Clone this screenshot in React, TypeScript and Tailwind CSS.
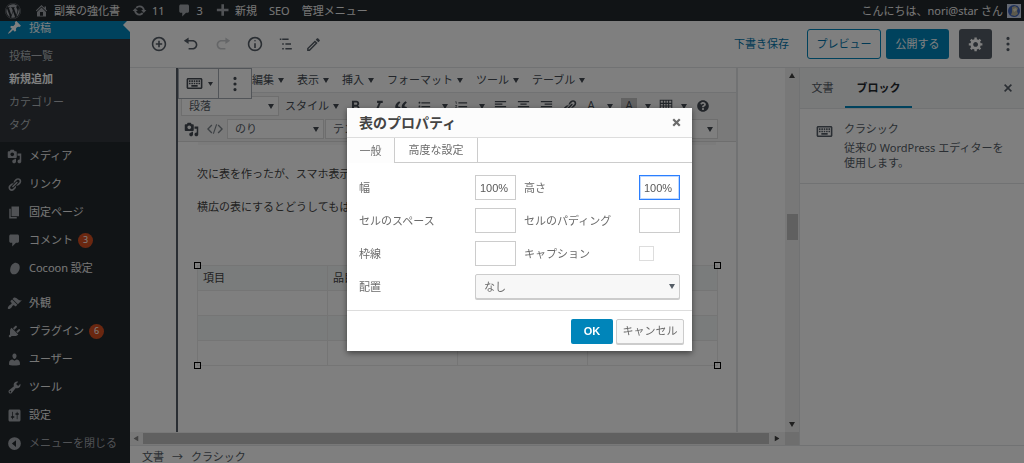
import React from 'react'
import { clsx } from 'clsx'
import { FaWordpress, FaQuestionCircle } from 'react-icons/fa'
import {
  MdFormatBold,
  MdFormatItalic,
  MdFormatListBulleted,
  MdFormatListNumbered,
  MdFormatAlignLeft,
  MdFormatAlignCenter,
  MdFormatAlignRight,
  MdOutlineEdit,
} from 'react-icons/md'

// 20x20 admin glyphs
const icons = {
  home: 'M16 8.5l1.53 1.53-1.06 1.06L10 4.6l-6.47 6.49-1.06-1.06L10 2.5l4 4v-2h2v4zm-6-2.46l6 5.99V18H4v-5.97zM12 17v-5H8v5h4z',
  update:
    'M10.2 3.28c3.53 0 6.43 2.61 6.92 6h2.08l-3.5 4-3.5-4h2.32c-.45-1.97-2.21-3.45-4.32-3.45-1.45 0-2.73.71-3.54 1.78L4.95 5.66C6.23 4.2 8.11 3.28 10.2 3.28zm-.4 13.44c-3.52 0-6.43-2.61-6.92-6H.8l3.5-4c1.17 1.33 2.33 2.67 3.5 4H5.48c.45 1.97 2.21 3.45 4.32 3.45 1.45 0 2.73-.71 3.54-1.78l1.71 1.95c-1.28 1.46-3.15 2.38-5.25 2.38z',
  comment: 'M5 2h9c1.1 0 2 .9 2 2v7c0 1.1-.9 2-2 2h-2l-5 5v-5H5c-1.1 0-2-.9-2-2V4c0-1.1.9-2 2-2z',
  plus: 'M18 7.5V11h-6v6H8.5v-6h-6V7.5h6v-6H12v6z',
  post: 'M10.44 3.02l1.82-1.82 6.36 6.35-1.83 1.82c-1.05-.68-2.48-.57-3.41.36l-.75.75c-.92.93-1.04 2.35-.35 3.41l-1.83 1.82-2.41-2.41-2.8 2.79c-.42.42-3.38 2.71-3.8 2.29s1.86-3.39 2.28-3.81l2.79-2.79L4.1 9.36l1.83-1.82c1.05.69 2.48.57 3.4-.36l.75-.75c.93-.92 1.05-2.35.36-3.41z',
  media:
    'M13 11V4c0-.55-.45-1-1-1h-1.67L9 1H5L3.67 3H2c-.55 0-1 .45-1 1v7c0 .55.45 1 1 1h10c.55 0 1-.45 1-1zM7 4.5c1.38 0 2.5 1.12 2.5 2.5S8.38 9.5 7 9.5 4.5 8.38 4.5 7 5.62 4.5 7 4.5zM14 6h5v10.5c0 1.38-1.12 2.5-2.5 2.5S14 17.88 14 16.5s1.12-2.5 2.5-2.5c.17 0 .34.02.5.05V9h-3V6zm-4 8.05V13h2v3.5c0 1.38-1.12 2.5-2.5 2.5S7 17.88 7 16.5 8.12 14 9.5 14c.17 0 .34.02.5.05z',
  link: 'M17.74 2.76c1.68 1.69 1.68 4.41 0 6.1l-1.53 1.52c-1.12 1.12-2.7 1.47-4.14 1.09l2.62-2.61.76-.77.76-.76c.84-.84.84-2.2 0-3.04-.84-.85-2.2-.85-3.04 0l-.77.76-3.38 3.38c-.37-1.44-.02-3.02 1.1-4.14l1.52-1.53c1.69-1.68 4.42-1.68 6.1 0zM8.59 13.43l5.34-5.34c.42-.42.42-1.1 0-1.52-.44-.43-1.13-.39-1.53 0l-5.33 5.34c-.42.42-.42 1.1 0 1.52.44.43 1.13.39 1.52 0zm-.76 2.29l4.14-4.15c.38 1.44.03 3.02-1.09 4.14l-1.52 1.53c-1.69 1.68-4.41 1.68-6.1 0-1.68-1.68-1.68-4.42 0-6.1l1.53-1.52c1.12-1.12 2.7-1.47 4.14-1.1l-4.14 4.15c-.85.84-.85 2.2 0 3.05.84.84 2.2.84 3.04 0z',
  page: 'M6 15V2h10v13H6zm-1 1h8v2H3V5h2v11z',
  appearance:
    'M14.48 11.06L7.41 3.99l1.5-1.5c.5-.56 2.3-.47 3.51.32 1.21.8 1.43 1.28 2.91 2.1 1.18.64 2.45 1.26 4.45.85zm-.71.71L6.7 4.7 4.93 6.47c-.39.39-.39 1.02 0 1.41l1.06 1.06c.39.39.39 1.03 0 1.42-.6.6-1.43 1.11-2.21 1.69-.35.26-.7.53-1.01.84C1.43 14.23.4 16.08 1.4 17.07c.99 1 2.84-.03 4.18-1.36.31-.31.58-.66.85-1.02.57-.78 1.08-1.61 1.69-2.21.39-.39 1.02-.39 1.41 0l1.06 1.06c.39.39 1.02.39 1.41 0z',
  plugins:
    'M13.11 4.36L9.87 7.6 8 5.73l3.24-3.24c.35-.34 1.05-.2 1.56.32.52.51.66 1.21.31 1.55zm-8 1.77l.91-1.12 9.01 9.01-1.19.84c-.71.71-2.63 1.16-3.82 1.16H6.14L4.9 17.26c-.59.59-1.54.59-2.12 0-.59-.58-.59-1.53 0-2.12l1.24-1.24v-3.88c0-1.13.4-3.19 1.09-3.89zm7.26 3.97l3.24-3.24c.34-.35 1.04-.21 1.55.31.52.51.66 1.21.31 1.55l-3.24 3.25z',
  users:
    'M10 9.25c-2.27 0-2.73-3.44-2.73-3.44C7 4.02 7.82 2 9.97 2c2.16 0 2.98 2.02 2.71 3.81 0 0-.41 3.44-2.68 3.44zm0 2.57L12.72 10c2.39 0 4.52 2.33 4.52 4.53v2.49s-3.65 1.13-7.24 1.13c-3.65 0-7.24-1.13-7.24-1.13v-2.49c0-2.25 1.94-4.48 4.47-4.48z',
  tools:
    'M16.68 9.77c-1.34 1.34-3.3 1.67-4.95.99l-5.41 6.52c-.99.99-2.59.99-3.58 0s-.99-2.59 0-3.57l6.52-5.42c-.68-1.65-.35-3.61.99-4.95 1.28-1.28 3.12-1.62 4.72-1.06l-2.89 2.89 2.82 2.82 2.86-2.87c.53 1.58.18 3.39-1.08 4.65zM3.81 16.21c.4.39 1.04.39 1.43 0 .4-.4.4-1.04 0-1.43-.39-.4-1.03-.4-1.43 0-.39.39-.39 1.03 0 1.43z',
  settings:
    'M18 16V4c0-1.1-.9-2-2-2H4c-1.1 0-2 .9-2 2v12c0 1.1.9 2 2 2h12c1.1 0 2-.9 2-2zM8 11h1c.55 0 1 .45 1 1s-.45 1-1 1H8v1.5c0 .28-.22.5-.5.5s-.5-.22-.5-.5V13H6c-.55 0-1-.45-1-1s.45-1 1-1h1V5.5c0-.28.22-.5.5-.5s.5.22.5.5V11zm5-2h-1c-.55 0-1-.45-1-1s.45-1 1-1h1V5.5c0-.28.22-.5.5-.5s.5.22.5.5V7h1c.55 0 1 .45 1 1s-.45 1-1 1h-1v5.5c0 .28-.22.5-.5.5s-.5-.22-.5-.5V9z',
  collapse: 'M10 1.5a8.5 8.5 0 1 0 0 17 8.5 8.5 0 0 0 0-17zM12 14.5V5.5L6.5 10z',
  cocoon: 'M12.5 2.5c3.6.6 5.2 4.2 4.2 8.2-1 4.2-4.4 7.6-8 7-3.6-.6-5.2-4.2-4.2-8.2 1-4.2 4.4-7.6 8-7z',
  insert:
    'M10 1c-5 0-9 4-9 9s4 9 9 9 9-4 9-9-4-9-9-9zm0 16c-3.9 0-7-3.1-7-7s3.1-7 7-7 7 3.1 7 7-3.1 7-7 7zm1-11H9v3H6v2h3v3h2v-3h3V9h-3V6z',
  undo: 'M12 5H7V2L1 6l6 4V7h5c2.2 0 4 1.8 4 4s-1.8 4-4 4H7v2h5c3.3 0 6-2.7 6-6s-2.7-6-6-6z',
  redo: 'M8 5h5V2l6 4-6 4V7H8c-2.2 0-4 1.8-4 4s1.8 4 4 4h5v2H8c-3.3 0-6-2.7-6-6s2.7-6 6-6z',
  info: 'M9 15h2V9H9v6zm1-10c-.5 0-1 .5-1 1s.5 1 1 1 1-.5 1-1-.5-1-1-1zm0-4c-5 0-9 4-9 9s4 9 9 9 9-4 9-9-4-9-9-9zm0 16c-3.9 0-7-3.1-7-7s3.1-7 7-7 7 3.1 7 7-3.1 7-7 7z',
  outline: 'M1 3h2v2H1zM4 3h8v2H4zM4 9h2v2H4zM8 9h7v2H8zM4 15h2v2H4zM8 15h8v2H8z',
  gear: 'M18 12h-2.18c-.17.7-.44 1.35-.81 1.93l1.54 1.54-2.1 2.1-1.54-1.54c-.58.36-1.23.63-1.91.79V19H8v-2.18c-.68-.16-1.33-.43-1.91-.79l-1.54 1.54-2.12-2.12 1.54-1.54c-.36-.58-.63-1.23-.79-1.91H1V9.03h2.17c.16-.7.44-1.35.8-1.94L2.43 5.55l2.1-2.1 1.54 1.54c.58-.37 1.24-.64 1.93-.81V2h3v2.18c.68.16 1.33.43 1.91.79l1.54-1.54 2.12 2.12-1.54 1.54c.36.59.64 1.24.8 1.94H18V12zm-8.5 1.5c1.66 0 3-1.34 3-3s-1.34-3-3-3-3 1.34-3 3 1.34 3 3 3z',
  more: 'M8 3a2 2 0 1 0 4 0 2 2 0 0 0-4 0zM8 10a2 2 0 1 0 4 0 2 2 0 0 0-4 0zM8 17a2 2 0 1 0 4 0 2 2 0 0 0-4 0z',
  close: 'M14.95 6.46L11.41 10l3.54 3.54-1.41 1.41L10 11.42l-3.53 3.53-1.42-1.42L8.58 10 5.05 6.47l1.42-1.42L10 8.58l3.54-3.53z',
  closeBold: 'M4.5 1L10 6.5 15.5 1 19 4.5 13.5 10l5.5 5.5-3.5 3.5-5.5-5.5L4.5 19 1 15.5 6.5 10 1 4.5z',
  quote:
    'M9.49 13.22c0-.74-.2-1.38-.61-1.9-.62-.78-1.83-.88-2.53-.72-.29-1.65 1.11-3.75 2.92-4.65L7.88 4c-2.73 1.3-5.42 4.28-4.96 8.05C3.21 14.43 4.59 16 6.54 16c.85 0 1.56-.25 2.12-.75s.83-1.18.83-2.03zm8.05 0c0-.74-.2-1.38-.61-1.9-.63-.78-1.83-.88-2.53-.72-.29-1.65 1.11-3.75 2.92-4.65L15.93 4c-2.73 1.3-5.41 4.28-4.95 8.05.28 2.38 1.66 3.95 3.61 3.95.85 0 1.56-.25 2.12-.75s.83-1.18.83-2.03z',
  code: 'M5.5 4.5L0 10l5.5 5.5 1.2-1.2L2.4 10l4.3-4.3zM14.5 4.5L20 10l-5.5 5.5-1.2-1.2 4.3-4.3-4.3-4.3zM11.3 4h1.5L8.7 16H7.2z',
  table: 'M1 1h18v18H1zM2.5 2.5v3h3v-3zM7 2.5v3h2.3v-3zM10.8 2.5v3H13v-3zM14.5 2.5v3h3v-3zM2.5 7v2.3h3V7zM7 7v2.3h2.3V7zM10.8 7v2.3H13V7zM14.5 7v2.3h3V7zM2.5 10.8V13h3v-2.2zM7 10.8V13h2.3v-2.2zM10.8 10.8V13H13v-2.2zM14.5 10.8V13h3v-2.2zM2.5 14.5v3h3v-3zM7 14.5v3h2.3v-3zM10.8 14.5v3H13v-3zM14.5 14.5v3h3v-3z',
}

type IconName = keyof typeof icons

function Icon({ name, size = 15, className }: { name: IconName; size?: number; className?: string }) {
  return (
    <svg
      viewBox="0 0 20 20"
      width={size}
      height={size}
      fill="currentColor"
      fillRule="evenodd"
      aria-hidden="true"
      className={clsx('shrink-0', className)}
    >
      <path d={icons[name]} />
    </svg>
  )
}

function KeyboardIcon() {
  return (
    <svg viewBox="0 0 24 24" width={19} height={19} fill="currentColor" aria-hidden="true" className="shrink-0">
      <path d="M20 7v10H4V7h16m0-2H4c-1.1 0-1.99.9-1.99 2L2 17c0 1.1.9 2 2 2h16c1.1 0 2-.9 2-2V7c0-1.1-.9-2-2-2zm-9 3h2v2h-2zm0 3h2v2h-2zM8 8h2v2H8zm0 3h2v2H8zm-3 0h2v2H5zm0-3h2v2H5zm3 6h8v2H8zm6-3h2v2h-2zm0-3h2v2h-2zm3 3h2v2h-2zm0-3h2v2h-2z" />
    </svg>
  )
}

function Caret({ className }: { className?: string }) {
  return (
    <svg viewBox="0 0 6 5" width={6} height={5} fill="currentColor" aria-hidden="true" className={clsx('shrink-0', className)}>
      <path d="M0 0h6L3 5z" />
    </svg>
  )
}

const menuItems: { icon: IconName; label: string; count?: number }[] = [
  { icon: 'media', label: 'メディア' },
  { icon: 'link', label: 'リンク' },
  { icon: 'page', label: '固定ページ' },
  { icon: 'comment', label: 'コメント', count: 3 },
  { icon: 'cocoon', label: 'Cocoon 設定' },
]

const adminItems: { icon: IconName; label: string; count?: number }[] = [
  { icon: 'appearance', label: '外観' },
  { icon: 'plugins', label: 'プラグイン', count: 6 },
  { icon: 'users', label: 'ユーザー' },
  { icon: 'tools', label: 'ツール' },
  { icon: 'settings', label: '設定' },
]

const subItems = ['投稿一覧', '新規追加', 'カテゴリー', 'タグ']
const editorMenus = ['編集', '表示', '挿入', 'フォーマット', 'ツール', 'テーブル']

function AdminBar() {
  return (
    <header className="flex h-[21px] shrink-0 items-center justify-between bg-[#23282d] pr-[3px] pl-[5px] text-[#eee]">
      <nav className="flex items-center gap-3">
        <a href="#wp" aria-label="WordPress" className="mr-px text-[#a0a5aa]">
          <FaWordpress size={16} />
        </a>
        <a href="#site" className="flex items-center gap-[5px]">
          <Icon name="home" className="text-[#a0a5aa]" />
          副業の強化書
        </a>
        <a href="#updates" className="flex items-center gap-[5px]">
          <Icon name="update" className="text-[#a0a5aa]" />
          11
        </a>
        <a href="#comments" className="flex items-center gap-[5px]">
          <Icon name="comment" className="text-[#a0a5aa]" />3
        </a>
        <a href="#new" className="flex items-center gap-[5px]">
          <Icon name="plus" className="text-[#a0a5aa]" />
          新規
        </a>
        <a href="#seo">SEO</a>
        <a href="#menus">管理メニュー</a>
      </nav>
      <a href="#profile" className="flex items-center gap-1">
        こんにちは、nori@star さん
        <svg viewBox="0 0 14 14" width={14} height={14} aria-hidden="true">
          <rect width="14" height="14" fill="#c9d2e6" />
          <circle cx="7" cy="7" r="6" fill="#3d62b8" />
          <path d="M5 3l3-1 3 2-1 3 1 3-3 2-4-1 1-3z" fill="#b9b39a" />
          <path d="M6 5l3-1 1 2-3 2z" fill="#e8e2c8" />
        </svg>
      </a>
    </header>
  )
}

function MenuRow({ icon, label, count }: { icon: IconName; label: string; count?: number }) {
  return (
    <li>
      <a href={`#${icon}`} className="flex h-7 items-center gap-[7px] pl-[7px] text-[#eee]">
        <Icon name={icon} className="text-[#a0a5aa]" />
        {label}
        {count && (
          <span className="-ml-0.5 flex size-[15px] items-center justify-center rounded-full bg-[#d54e21] text-[9px] text-white">
            {count}
          </span>
        )}
      </a>
    </li>
  )
}

function AdminMenu() {
  return (
    <nav className="w-[130px] shrink-0 overflow-hidden bg-[#23282d]">
      <a
        href="#posts"
        className="relative -mt-[6px] flex h-6 items-center gap-[7px] bg-[#0085ba] pl-[7px] leading-none text-white"
      >
        <Icon name="post" />
        投稿
        <svg viewBox="0 0 7 14" width={7} height={14} aria-hidden="true" className="absolute top-[3px] right-0 fill-white">
          <path d="M7 0v14L0 7z" />
        </svg>
      </a>
      <ul className="bg-[#32373c] pt-[5px] pb-[6px]">
        {subItems.map((item) => (
          <li key={item}>
            <a
              href={`#${item}`}
              className={clsx(
                'flex h-[23px] items-center pl-[9px]',
                item === '新規追加' ? 'font-bold text-white' : 'text-[#b4b9be]'
              )}
            >
              {item}
            </a>
          </li>
        ))}
      </ul>
      <ul>
        {menuItems.map((item) => (
          <MenuRow key={item.label} {...item} />
        ))}
      </ul>
      <ul className="mt-[7px]">
        {adminItems.map((item) => (
          <MenuRow key={item.label} {...item} />
        ))}
      </ul>
      <button type="button" className="flex h-7 items-center gap-[7px] pl-[7px] text-[#a0a5aa]">
        <Icon name="collapse" />
        メニューを閉じる
      </button>
    </nav>
  )
}

function EditorHeader() {
  const tools: { icon: IconName; label: string; disabled?: boolean }[] = [
    { icon: 'insert', label: 'ブロックの追加' },
    { icon: 'undo', label: '元に戻す' },
    { icon: 'redo', label: 'やり直す', disabled: true },
    { icon: 'info', label: 'コンテンツ構造' },
    { icon: 'outline', label: 'ブロックナビゲーション' },
  ]

  return (
    <div className="flex h-[47px] shrink-0 items-center justify-between border-b border-[#e2e4e7] bg-white pr-2 pl-[21px] text-[#555d66]">
      <div className="flex items-center gap-4">
        {tools.map(({ icon, label, disabled }) => (
          <button
            key={icon}
            type="button"
            aria-label={label}
            disabled={disabled}
            className={clsx(disabled && 'opacity-30')}
          >
            <Icon name={icon} size={16} />
          </button>
        ))}
        <button type="button" aria-label="ツール" className="-ml-[6px]">
          <MdOutlineEdit size={17} />
        </button>
      </div>
      <div className="flex items-center">
        <button type="button" className="mr-[18px] text-[#0073aa]">
          下書き保存
        </button>
        <button
          type="button"
          className="mr-[5px] h-[30px] w-[74px] rounded-[3px] border border-[#0085ba] text-[#0073aa]"
        >
          プレビュー
        </button>
        <button type="button" className="mr-[10px] h-[30px] w-[63px] rounded-[3px] bg-[#0085ba] text-white">
          公開する
        </button>
        <button
          type="button"
          aria-label="設定"
          className="mr-2 flex h-[30px] w-[33px] items-center justify-center rounded-[3px] bg-[#555d66] text-white"
        >
          <Icon name="gear" size={16} />
        </button>
        <button type="button" aria-label="ツールと設定をさらに表示">
          <Icon name="more" size={16} />
        </button>
      </div>
    </div>
  )
}

function ToolSelect({ label, value, className }: { label: string; value: string; className?: string }) {
  return (
    <div className={clsx('relative flex h-5 items-center', className)}>
      <select
        aria-label={label}
        className="h-full w-full appearance-none border border-[#ddd] bg-white pl-[7px] text-[#555d66]"
      >
        <option>{value}</option>
      </select>
      <Caret className="pointer-events-none absolute right-[5px]" />
    </div>
  )
}

function ClassicToolbar() {
  return (
    <div className="border-b border-[#ddd] bg-[#f5f5f5] text-[#444b53]">
      <div className="flex h-[25px] items-center border-b border-[#e2e4e7] bg-white">
        <div className="relative z-10 flex h-[31px] w-[74px] shrink-0 self-start border border-[#a5abb3] bg-white">
          <button
            type="button"
            aria-label="ブロックタイプを変更"
            className="flex flex-1 items-center justify-center gap-1 border-r border-[#a5abb3]"
          >
            <KeyboardIcon />
            <svg viewBox="0 0 5 4" width={5} height={4} fill="currentColor" aria-hidden="true">
              <path d="M0 0h5L2.5 4z" />
            </svg>
          </button>
          <button type="button" aria-label="詳細設定" className="flex w-8 items-center justify-center">
            <Icon name="more" size={16} />
          </button>
        </div>
        <div className="flex items-center gap-[13px]">
          {editorMenus.map((menu) => (
            <button key={menu} type="button" className="flex items-center gap-1">
              {menu}
              <Caret />
            </button>
          ))}
        </div>
      </div>
      <div className="flex h-6 items-center pt-0.5 pl-[3px]">
        <ToolSelect label="段落形式" value="段落" className="w-[98px]" />
        <button type="button" className="ml-[6px] flex items-center gap-1">
          スタイル
          <Caret />
        </button>
        <button type="button" aria-label="太字" className="ml-2">
          <MdFormatBold size={17} />
        </button>
        <button type="button" aria-label="斜体" className="ml-[6px]">
          <MdFormatItalic size={17} />
        </button>
        <button type="button" aria-label="引用" className="ml-[6px]">
          <Icon name="quote" size={16} />
        </button>
        <button type="button" aria-label="番号なしリスト" className="ml-2 flex items-center gap-[10px]">
          <MdFormatListBulleted size={15} />
          <Caret />
        </button>
        <button type="button" aria-label="番号付きリスト" className="ml-[6px] flex items-center gap-[10px]">
          <MdFormatListNumbered size={15} />
          <Caret />
        </button>
        <button type="button" aria-label="左寄せ" className="ml-2">
          <MdFormatAlignLeft size={15} />
        </button>
        <button type="button" aria-label="中央揃え" className="ml-2">
          <MdFormatAlignCenter size={15} />
        </button>
        <button type="button" aria-label="右寄せ" className="ml-2">
          <MdFormatAlignRight size={15} />
        </button>
        <button type="button" aria-label="リンク" className="ml-2">
          <Icon name="link" />
        </button>
        <button type="button" aria-label="テキスト色" className="ml-[6px] flex items-center gap-2">
          <span className="w-4 text-center text-xs">A</span>
          <Caret />
        </button>
        <button type="button" aria-label="背景色" className="ml-2 flex items-center gap-2">
          <span className="w-4 bg-[#c4c4c4] text-center text-xs">A</span>
          <Caret />
        </button>
        <button type="button" aria-label="表" className="ml-2 flex items-center gap-2">
          <Icon name="table" size={14} />
          <Caret />
        </button>
        <button type="button" aria-label="ヘルプ" className="ml-[10px]">
          <FaQuestionCircle size={12} />
        </button>
      </div>
      <div className="flex h-6 items-center gap-px pr-[18px] pl-[6px]">
        <button type="button" aria-label="メディアを追加" className="mr-[7px]">
          <Icon name="media" />
        </button>
        <button type="button" aria-label="コード" className="mr-[3px] text-[#7d848b]">
          <Icon name="code" size={16} />
        </button>
        <ToolSelect label="吹き出し" value="のり" className="w-[97px]" />
        <ToolSelect label="テンプレート" value="テンプレート" className="flex-1" />
      </div>
    </div>
  )
}

function ContentTable() {
  return (
    <div className="relative mt-[50px]">
      <table className="w-full table-fixed border-collapse text-[#444]">
        <tbody>
          <tr className="h-[25px] bg-[#f5f9f8]">
            <td className="border border-[#ebebeb] px-[5px]">項目</td>
            <td className="border border-[#ebebeb] px-[5px]">品目</td>
            <td className="border border-[#ebebeb]" />
            <td className="border border-[#ebebeb]" />
          </tr>
          {[0, 1, 2].map((row) => (
            <tr key={row} className={clsx('h-[25px]', row === 1 && 'bg-[#f5f9f8]')}>
              {[0, 1, 2, 3].map((col) => (
                <td key={col} className="border border-[#ebebeb]" />
              ))}
            </tr>
          ))}
        </tbody>
      </table>
      {/* Resize handles */}
      <span className="absolute -top-[3px] -left-[3px] size-[7px] border border-black" />
      <span className="absolute -top-[3px] -right-[3px] size-[7px] border border-black" />
      <span className="absolute -bottom-[3px] -left-[3px] size-[7px] border border-black" />
      <span className="absolute -right-[3px] -bottom-[3px] size-[7px] border border-black" />
    </div>
  )
}

function Editor() {
  return (
    <div className="flex min-w-0 flex-1 flex-col">
      <div className="flex min-h-0 flex-1">
        <div className="min-w-0 flex-1 overflow-hidden bg-white pr-[47px] pl-[46px]">
          <div className="h-full border-r-2 border-l-2 border-r-[#e2e4e7] border-l-[#555d66]">
            <ClassicToolbar />
            <div className="mx-5 h-[3px] bg-[#f6f6f6]" />
            <div className="pt-[21px] pr-[18px] pl-[19px] leading-4 text-[#444]">
              <p className="truncate">次に表を作ったが、スマホ表示で崩れてしまう。</p>
              <p className="mt-[17px] truncate">横広の表にするとどうしてもはみ出してしまう。</p>
              <ContentTable />
            </div>
          </div>
        </div>
        {/* Vertical scrollbar */}
        <div className="flex w-[14px] shrink-0 flex-col items-center bg-[#f1f1f1] py-[5px] text-[#404040]">
          <Caret className="rotate-180" />
          <div className="mt-[136px] h-[26px] w-[11px] bg-[#c1c1c1]" />
          <Caret className="mt-auto" />
        </div>
      </div>
      {/* Horizontal scrollbar */}
      <div className="flex h-[13px] shrink-0 items-center bg-[#f1f1f1] text-[#404040]">
        <Caret className="mr-1 ml-[3px] rotate-90 opacity-60" />
        <div className="h-[11px] flex-1 bg-[#c1c1c1]" />
        <Caret className="mx-[5px] -rotate-90" />
        <div className="h-full w-[14px] bg-[#dcdcdc]" />
      </div>
    </div>
  )
}

function BlockSidebar() {
  return (
    <aside className="w-[225px] shrink-0 border-l border-[#e2e4e7] bg-white text-[#555d66]">
      <div className="flex h-[41px] items-stretch border-b border-[#e2e4e7] bg-[#f3f4f5]">
        <button type="button" className="w-[45px]">
          文書
        </button>
        <button type="button" className="w-[67px] border-b-2 border-[#0085ba] pt-0.5 font-bold text-[#23282d]">
          ブロック
        </button>
        <button type="button" aria-label="設定を閉じる" className="mr-2 ml-auto">
          <Icon name="close" size={16} />
        </button>
      </div>
      <div className="flex gap-[10px] border-b border-[#e2e4e7] pt-3 pr-4 pb-[13px] pl-[15px]">
        <span className="mt-px">
          <KeyboardIcon />
        </span>
        <div>
          <h2 className="leading-4">クラシック</h2>
          <p className="mt-[3px] leading-[15px]">従来の WordPress エディターを使用します。</p>
        </div>
      </div>
    </aside>
  )
}

function TablePropertiesDialog() {
  const inputClass =
    "h-[25px] w-[41px] border bg-white px-1 font-['Liberation_Sans',sans-serif] text-[#595959] outline-none"

  return (
    <div className="fixed inset-0 z-30 flex items-center justify-center pb-1 pl-[15px]">
      <div
        role="dialog"
        aria-labelledby="dialog-title"
        className="w-[345px] bg-white text-[#6b6b6b] shadow-[0_2px_6px_rgba(0,0,0,0.5)]"
      >
        <div className="flex h-[30px] items-center justify-between border-b border-[#ddd] bg-[#fcfcfc] pr-[11px] pl-3">
          <h1 id="dialog-title" className="text-sm font-bold text-[#444]">
            表のプロパティ
          </h1>
          <button type="button" aria-label="閉じる">
            <Icon name="closeBold" size={9} />
          </button>
        </div>
        <div role="tablist" className="flex h-[25px]">
          <button type="button" role="tab" aria-selected="true" className="w-[47px] bg-[#fdfdfd] text-[#777]">
            一般
          </button>
          <button
            type="button"
            role="tab"
            aria-selected="false"
            className="w-[84px] border-r border-b border-l border-[#ccc]"
          >
            高度な設定
          </button>
          <div className="flex-1 border-b border-[#ccc]" />
        </div>
        <div className="grid grid-cols-[116px_41px_1fr_41px] items-center gap-y-2 px-3 pt-3 pb-[11px]">
          <label htmlFor="width">幅</label>
          <input id="width" type="text" defaultValue="100%" className={clsx(inputClass, 'border-[#ccc]')} />
          <label htmlFor="height" className="pl-2">
            高さ
          </label>
          <input
            id="height"
            type="text"
            defaultValue="100%"
            className={clsx(inputClass, 'border-blue-500 ring-1 ring-blue-500/30 ring-inset')}
          />
          <label htmlFor="cell-space">セルのスペース</label>
          <input id="cell-space" type="text" className={clsx(inputClass, 'border-[#ccc]')} />
          <label htmlFor="cell-padding" className="pl-2">
            セルのパディング
          </label>
          <input id="cell-padding" type="text" className={clsx(inputClass, 'border-[#ccc]')} />
          <label htmlFor="border">枠線</label>
          <input id="border" type="text" className={clsx(inputClass, 'border-[#ccc]')} />
          <label htmlFor="caption" className="pl-2">
            キャプション
          </label>
          <input id="caption" type="checkbox" className="size-[15px] appearance-none border border-[#ddd] bg-white" />
          <label htmlFor="align">配置</label>
          <div className="relative col-span-3 flex h-[25px] items-center">
            <select
              id="align"
              className="h-full w-full appearance-none rounded-[2px] border border-[#ccc] bg-[#f7f7f7] pl-2 text-[#6b6b6b] shadow-[0_1px_0_#ccc]"
            >
              <option>なし</option>
            </select>
            <Caret className="pointer-events-none absolute right-[5px] text-[#555d66]" />
          </div>
        </div>
        <div className="flex h-[41px] items-center justify-end gap-[3px] border-t border-[#ddd] pr-2">
          <button
            type="button"
            className="h-[25px] w-[42px] rounded-[2px] bg-[#0085ba] font-['Liberation_Sans',sans-serif] font-bold text-white"
          >
            OK
          </button>
          <button
            type="button"
            className="h-[25px] w-[68px] rounded-[2px] border border-[#ccc] bg-[#f7f7f7] shadow-[0_1px_0_#ccc]"
          >
            キャンセル
          </button>
        </div>
      </div>
    </div>
  )
}

export default function App() {
  return (
    <div className="relative flex h-screen flex-col overflow-hidden bg-white font-['Noto_Sans','Noto_Sans_CJK_JP',sans-serif] text-[11px] leading-4 whitespace-nowrap">
      <AdminBar />
      <div className="flex min-h-0 flex-1">
        <AdminMenu />
        <main className="flex min-w-0 flex-1 flex-col">
          <EditorHeader />
          <div className="flex min-h-0 flex-1 whitespace-normal">
            <Editor />
            <BlockSidebar />
          </div>
          <footer className="flex h-[18px] shrink-0 items-center gap-2 border-t border-[#e2e4e7] pt-1 pl-3 text-[#555d66]">
            <span>文書</span>
            <span>→</span>
            <span>クラシック</span>
          </footer>
        </main>
      </div>
      <div className="fixed inset-0 z-20 bg-black/50" />
      <TablePropertiesDialog />
    </div>
  )
}
